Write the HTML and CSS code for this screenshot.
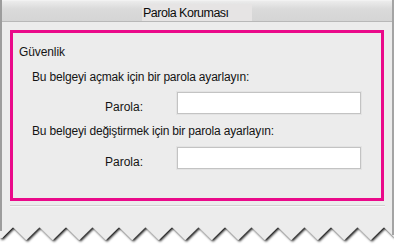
FILE: index.html
```html
<!DOCTYPE html>
<html lang="tr">
<head>
<meta charset="utf-8">
<link rel="stylesheet" href="styles.css">
</head>
<body>
<div class="window">
  <div class="body">
    <div class="titlebar"><span class="title">Parola Koruması</span></div>
    <div class="group">
      <div class="legend">Güvenlik</div>
      <div class="line">Bu belgeyi açmak için bir parola ayarlayın:</div>
      <div class="row row1">
        <label class="label">Parola:</label>
        <div class="input"></div>
      </div>
      <div class="line">Bu belgeyi değiştirmek için bir parola ayarlayın:</div>
      <div class="row row2">
        <label class="label">Parola:</label>
        <div class="input"></div>
      </div>
    </div>
    <div class="sep"></div>
  </div>
  <svg class="torn" width="396" height="20" viewBox="0 0 396 20">
    <defs>
      <filter id="sh" x="-5%" y="-50%" width="110%" height="200%">
        <feDropShadow dx="1.3" dy="1.6" stdDeviation="1" flood-color="#000" flood-opacity="0.95"/>
      </filter>
    </defs>
    <path filter="url(#sh)" fill="#ececec" d="M0,0 L394,0 L394,12 L384,2 L370.75,15 L357.5,2 L344.25,15 L331,2 L317.75,15 L304.5,2 L291.25,15 L278,2 L264.75,15 L251.5,2 L238.25,15 L225,2 L211.75,15 L198.5,2 L185.25,15 L172,2 L158.75,15 L145.5,2 L132.25,15 L119,2 L105.75,15 L92.5,2 L79.25,15 L66,2 L52.75,15 L39.5,2 L26.25,15 L13,2 L2,13 L0,13 Z"/>
    <rect x="0" y="0" width="2" height="6" fill="#9c9c9c"/>
    <rect x="392" y="0" width="2" height="10" fill="#a4a4a4"/>
    <rect x="394" y="0" width="2" height="20" fill="#ffffff"/>
  </svg>
</div>
</body>
</html>
```
FILE: styles.css
```css
html, body {
  margin: 0;
  padding: 0;
  background: #ffffff;
}
body {
  width: 396px;
  height: 245px;
  overflow: hidden;
  font-family: "Liberation Sans", Arial, sans-serif;
  font-size: 12px;
  color: #141414;
}
.window {
  width: 396px;
}
.body {
  width: 394px;
  box-sizing: border-box;
  background: #ececec;
  border-left: 2px solid #9c9c9c;
  border-right: 2px solid #a4a4a4;
  padding-bottom: 18px;
}
.titlebar {
  height: 22px;
  box-sizing: border-box;
  padding-top: 3px;
  background: linear-gradient(#ececec, #dadada 40%, #d5d5d5);
  border-bottom: 1px solid #b8b8b8;
  border-top: 1px solid #f2f2f2;
}
.title {
  display: block;
  width: 110px;
  height: 17px;
  box-sizing: border-box;
  margin: 0 auto;
  padding: 2px 0 0 1px;
  line-height: 15px;
  background: #e6e4e4;
  font-size: 12.5px;
  letter-spacing: -0.5px;
  color: #0c0c0c;
}
.group {
  margin: 8px 0 0 8px;
  width: 374px;
  height: 171px;
  box-sizing: border-box;
  border: 3px solid #ea0a8a;
  padding: 12px 0 0 6px;
}
.legend {
  line-height: 15px;
  letter-spacing: -0.1px;
}
.line {
  margin: 10px 0 0 13px;
  line-height: 15px;
  letter-spacing: -0.18px;
}
.row {
  display: flex;
  align-items: flex-end;
  gap: 34px;
  margin-left: 13px;
}
.row1 { margin-top: 7px; }
.row2 { margin-top: 8px; }
.label {
  width: 111px;
  text-align: right;
  line-height: 15px;
  margin-bottom: -1px;
}
.input {
  width: 184px;
  height: 22px;
  box-sizing: border-box;
  background: #ffffff;
  border: 1px solid #c3c3c3;
  box-shadow: 0 0 0 1px #e3e3e3;
}
.sep {
  margin: 4px 0 0 8px;
  width: 375px;
  height: 1px;
  background: #d2d2d2;
  border-bottom: 1px solid #f6f6f6;
}
.torn {
  display: block;
}
```
